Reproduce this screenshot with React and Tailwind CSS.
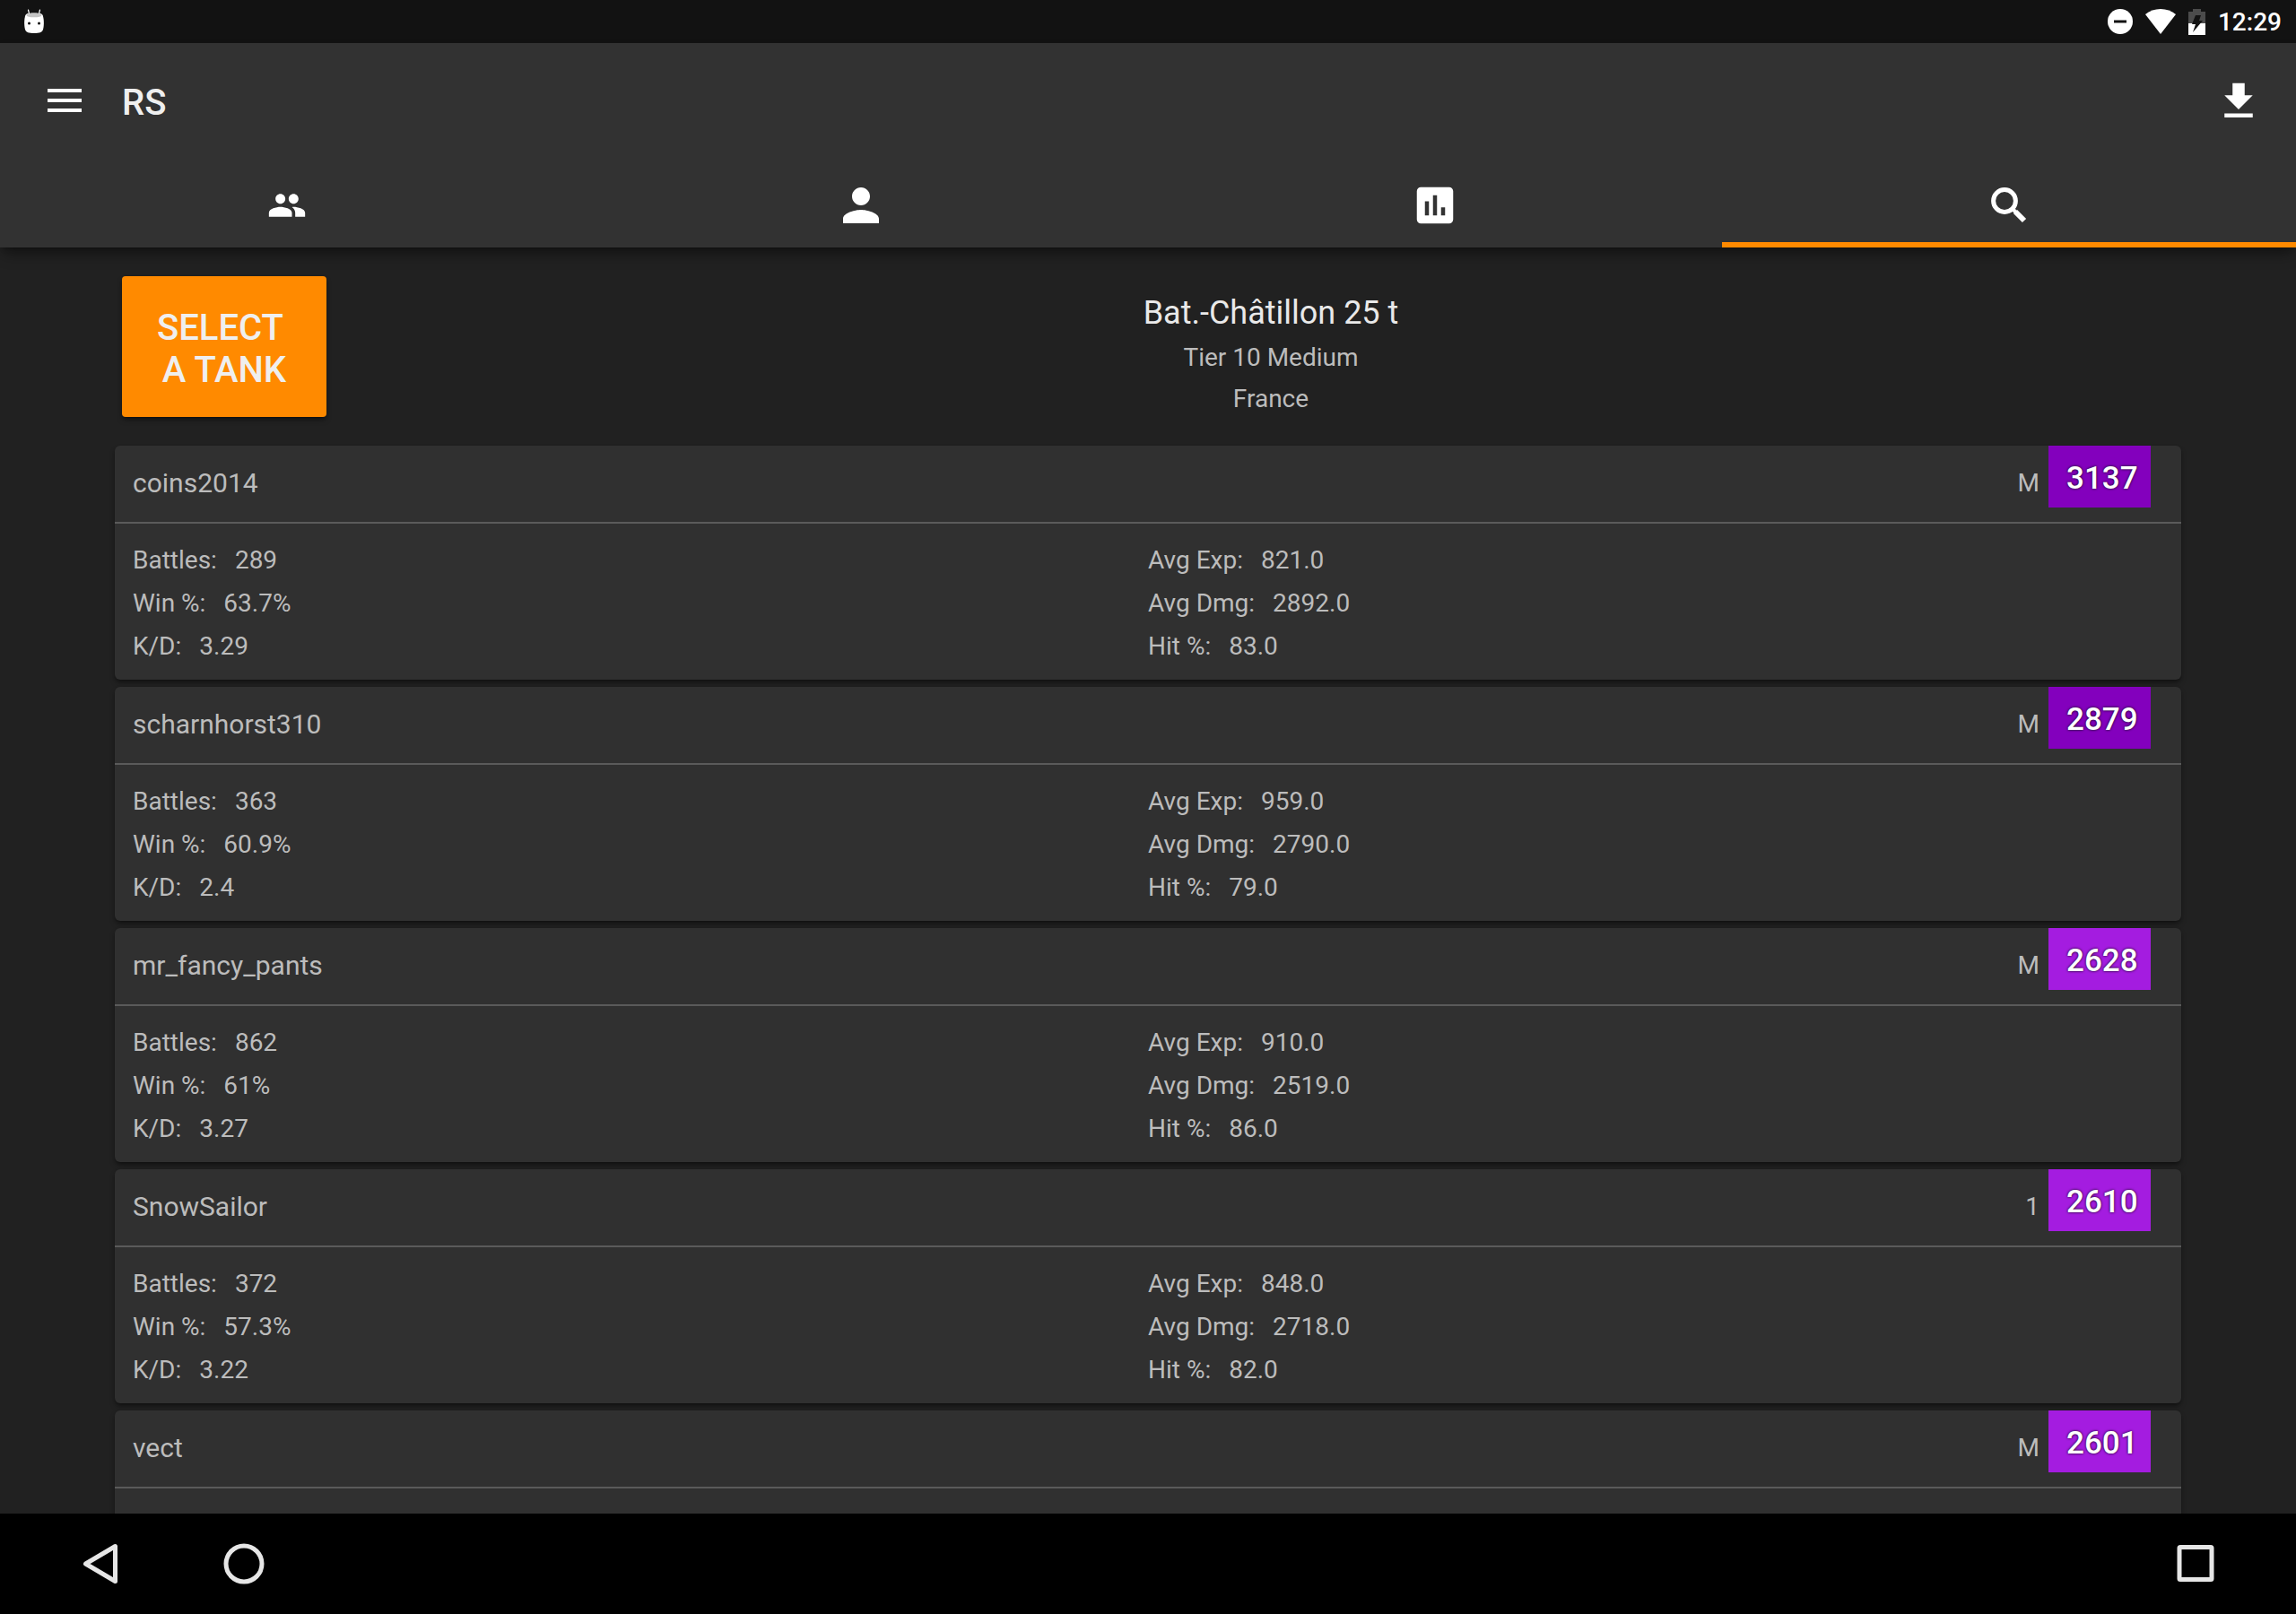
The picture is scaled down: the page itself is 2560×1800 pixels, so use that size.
import { useState } from "react";
import {
  MdAssessment,
  MdFileDownload,
  MdPeople,
  MdPerson,
} from "react-icons/md";

const SearchIcon = () => (
  <svg width="40" height="40" viewBox="0 0 40 40" fill="none" stroke="#fff">
    <circle cx="15" cy="15" r="12.4" strokeWidth="5" />
    <path d="M24 24l4 4" strokeWidth="4" />
    <path d="M27 27l10 10" strokeWidth="6" />
  </svg>
);

const TABS = [
  { id: "clan", label: "Clan", icon: <MdPeople size={44} /> },
  { id: "player", label: "Player", icon: <MdPerson size={60} /> },
  { id: "stats", label: "Stats", icon: <MdAssessment size={54} /> },
  { id: "search", label: "Search", icon: <SearchIcon /> },
];

const PLAYERS = [
  {
    name: "coins2014",
    mark: "M",
    rating: 3137,
    stats: {
      battles: "289",
      win: "63.7%",
      kd: "3.29",
      exp: "821.0",
      dmg: "2892.0",
      hit: "83.0",
    },
  },
  {
    name: "scharnhorst310",
    mark: "M",
    rating: 2879,
    stats: {
      battles: "363",
      win: "60.9%",
      kd: "2.4",
      exp: "959.0",
      dmg: "2790.0",
      hit: "79.0",
    },
  },
  {
    name: "mr_fancy_pants",
    mark: "M",
    rating: 2628,
    stats: {
      battles: "862",
      win: "61%",
      kd: "3.27",
      exp: "910.0",
      dmg: "2519.0",
      hit: "86.0",
    },
  },
  {
    name: "SnowSailor",
    mark: "1",
    rating: 2610,
    stats: {
      battles: "372",
      win: "57.3%",
      kd: "3.22",
      exp: "848.0",
      dmg: "2718.0",
      hit: "82.0",
    },
  },
  { name: "vect", mark: "M", rating: 2601 },
];

const StatusBar = () => (
  <div className="flex h-12 shrink-0 items-center bg-[#121212] pr-4 pl-[26px] text-white">
    <svg width="24" height="28" viewBox="0 0 24 28">
      <path
        d="M5.5 1l1.2 5M18.5 1l-1.2 5"
        stroke="#fff"
        strokeWidth="1.2"
        strokeLinecap="round"
      />
      <path
        d="M3 6C5 4 19 4 21 6C23 9 23.5 17 22 23C21 26 18 27 12 27S3 26 2 23C.5 17 1 9 3 6z"
        fill="#fff"
      />
      <ellipse cx="12" cy="7" rx="8.5" ry="2.3" fill="#c4c4c4" />
      <circle cx="6.5" cy="16" r="1.5" fill="#121212" />
      <circle cx="17.5" cy="16" r="1.5" fill="#121212" />
    </svg>
    <div className="ml-auto flex items-center">
      <svg width="28" height="28" viewBox="0 0 28 28" className="mr-3.5">
        <circle cx="14" cy="14" r="14" fill="#fff" />
        <path d="M7 12.5h14v3H7z" fill="#121212" />
      </svg>
      <svg width="34" height="28" viewBox="0 0 34 28" className="mr-3.5">
        <path d="M17 28L0 6C9-2 25-2 34 6z" fill="#fff" />
      </svg>
      <svg width="19" height="29" viewBox="0 0 19 29" className="mr-3.5">
        <path d="M0 16V3h5V0h9v3h5v13z" fill="#4c4c4c" />
        <path d="M0 16h19v13H0z" fill="#fff" />
        <path d="M8 7h6l-2 6h4L5 26l3-9H4z" fill="#121212" />
      </svg>
      <span className="pt-0.5 text-[28px] leading-8 font-medium">12:29</span>
    </div>
  </div>
);

const AppBar = () => (
  <div className="flex h-[132px] items-center pr-[37px] pb-1 pl-[52px]">
    <button type="button" aria-label="Menu">
      <svg width="40" height="28" viewBox="0 0 40 28">
        <path d="M1 1h38v4H1zM1 12h38v4H1zM1 23h38v4H1z" fill="#fff" />
      </svg>
    </button>
    <h1 className="ml-11 pt-1.5 text-[40px] leading-12 font-medium text-[#efefef]">
      RS
    </h1>
    <button
      type="button"
      aria-label="Download"
      className="ml-auto pt-0.5 text-white"
    >
      <MdFileDownload size={54} />
    </button>
  </div>
);

const Tabs = ({ active, onChange }) => (
  <nav className="grid h-24 grid-cols-4">
    {TABS.map(({ id, label, icon }) => (
      <button
        key={id}
        type="button"
        aria-label={label}
        onClick={() => onChange(id)}
        className={`flex items-center justify-center border-b-6 pt-2 text-white ${
          active === id ? "border-[#ff8a00]" : "border-transparent"
        }`}
      >
        {icon}
      </button>
    ))}
  </nav>
);

const TankHeader = () => (
  <div className="flex items-start pl-2">
    <button
      type="button"
      className="w-[228px] rounded bg-[#ff8a00] px-9 pt-[34px] pb-[29px] text-[40px] leading-[47px] font-medium whitespace-pre text-[#efefef] shadow-md shadow-black/40"
    >
      {"SELECT \nA TANK"}
    </button>
    <div className="ml-[38px] flex grow flex-col items-center pt-4 text-[28px] leading-[46px] text-[#bcbcbc]">
      <h2 className="pt-0.5 pb-1 text-[36px] leading-[46px] text-[#e9e9e9]">
        Bat.-Châtillon 25 t
      </h2>
      <p>Tier 10 Medium</p>
      <p>France</p>
    </div>
  </div>
);

const Stat = ({ label, value }) => (
  <div className="flex gap-5">
    <dt>{label}:</dt>
    <dd>{value}</dd>
  </div>
);

const PlayerCard = ({ name, mark, rating, stats }) => {
  const badge = rating > 2800 ? "bg-[#8300bd]" : "bg-[#a41ce0]";

  return (
    <li className="min-h-[261px] overflow-hidden rounded-md bg-[#303030] text-[#bcbcbc] shadow-md shadow-black/40">
      <div className="flex h-[87px] items-start border-b-2 border-[#5a5a5a] pr-[34px] pl-5">
        <h3 className="pt-6 text-[30px] leading-9">{name}</h3>
        <span className="ml-auto pt-6 text-[28px] leading-9">{mark}</span>
        <span
          className={`ml-2.5 w-[114px] pt-[17px] pb-3 pl-5 text-[35px] leading-10 font-medium text-white text-shadow-[0_0_3px_#000] ${badge}`}
        >
          {rating}
        </span>
      </div>
      {stats && (
        <dl className="grid grid-cols-2 px-5 pt-[17px] pb-[13px] text-[28px] leading-12">
          <div>
            <Stat label="Battles" value={stats.battles} />
            <Stat label="Win %" value={stats.win} />
            <Stat label="K/D" value={stats.kd} />
          </div>
          <div>
            <Stat label="Avg Exp" value={stats.exp} />
            <Stat label="Avg Dmg" value={stats.dmg} />
            <Stat label="Hit %" value={stats.hit} />
          </div>
        </dl>
      )}
    </li>
  );
};

const NavBar = () => (
  <div className="flex h-28 shrink-0 items-center bg-black pr-[90px] pl-[92px]">
    <button type="button" aria-label="Back">
      <svg width="40" height="46" viewBox="0 0 40 46">
        <path
          d="M36.5 3.5v39L3.5 23z"
          fill="none"
          stroke="#e6e6e6"
          strokeWidth="5"
          strokeLinejoin="round"
        />
      </svg>
    </button>
    <button type="button" aria-label="Home" className="ml-[117px]">
      <svg width="46" height="46" viewBox="0 0 46 46">
        <circle
          cx="23"
          cy="23"
          r="20"
          fill="none"
          stroke="#e6e6e6"
          strokeWidth="5"
        />
      </svg>
    </button>
    <button type="button" aria-label="Recents" className="ml-auto">
      <svg width="44" height="44" viewBox="0 0 44 44">
        <rect
          x="4"
          y="3.5"
          width="36"
          height="36"
          rx="1"
          fill="none"
          stroke="#e6e6e6"
          strokeWidth="5"
        />
      </svg>
    </button>
  </div>
);

const App = () => {
  const [tab, setTab] = useState("search");

  return (
    <div className="flex h-screen flex-col bg-[#212121] font-[Roboto,sans-serif]">
      <StatusBar />
      <header className="z-10 shrink-0 bg-[#323232] shadow-lg shadow-black/40">
        <AppBar />
        <Tabs active={tab} onChange={setTab} />
      </header>
      <main className="min-h-0 grow overflow-hidden px-32 pt-8">
        <TankHeader />
        <ul className="mt-[29px] flex flex-col gap-2">
          {PLAYERS.map((player) => (
            <PlayerCard key={player.name} {...player} />
          ))}
        </ul>
      </main>
      <NavBar />
    </div>
  );
};

export default App;
